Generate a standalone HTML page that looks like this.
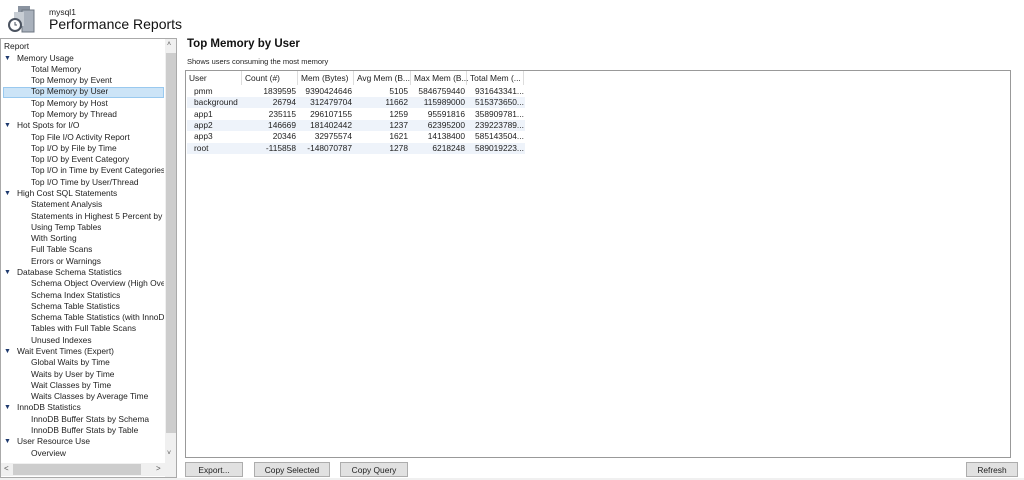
<!DOCTYPE html><html><head><style>
*{margin:0;padding:0;box-sizing:border-box}
body{width:1024px;height:480px;background:#fff;font-family:"Liberation Sans",sans-serif;font-size:8.4px;color:#222;position:relative;overflow:hidden}
.a{position:absolute;white-space:nowrap}
#tree{left:0;top:38px;width:177px;height:440px;border:1px solid #aaa;background:#fff;overflow:hidden}
.r{position:absolute;height:11px;line-height:11px;white-space:nowrap}
.c{left:17px}.c:before{content:"▼";position:absolute;left:-13px;font-size:7px;color:#1e3a6e}
.i{left:31px}
#tbl{left:185px;top:70px;width:826px;height:388px;border:1px solid #999;background:#fff}
.h{position:absolute;top:0;height:14px;line-height:14px;border-right:1px solid #ddd;padding-left:3px}
.row{position:absolute;left:1px;width:338px;height:11px;line-height:11px}
.row span{position:absolute}
.btn{position:absolute;top:462px;height:15px;line-height:15px;text-align:center;background:#e1e1e1;border:1px solid #adadad;font-size:8.4px}
</style></head><body>
<svg class="a" style="left:6px;top:4px" width="30" height="30" viewBox="0 0 30 30"><rect x="12" y="2" width="12" height="20" fill="#8a93a0"/><rect x="16" y="6" width="12" height="22" fill="#a9b1bc" stroke="#6c7580"/><rect x="8" y="8" width="10" height="14" fill="#c7cdd4"/><circle cx="9" cy="21" r="6" fill="#fff" stroke="#4b5360" stroke-width="2"/><path d="M9 18v3h2" stroke="#4b5360" fill="none"/></svg>
<div class="a" style="left:49px;top:7px;font-size:8.5px">mysql1</div>
<div class="a" style="left:49px;top:16px;font-size:14px;color:#111">Performance Reports</div>
<div id="tree" class="a">
<div class="r" style="left:3px;top:2px">Report</div>
<div class="a" style="left:164px;top:0;width:12px;height:438px;background:#f0f0f0"></div>
<div class="a" style="left:165px;top:14px;width:10px;height:380px;background:#cdcdcd"></div>
<div class="a" style="left:166px;top:2px;font-size:7px;color:#555">˄</div>
<div class="a" style="left:166px;top:411px;font-size:7px;color:#555">˅</div>
<div class="a" style="left:0;top:424px;width:164px;height:13px;background:#f0f0f0"></div>
<div class="a" style="left:12px;top:425px;width:128px;height:11px;background:#cdcdcd"></div>
<div class="a" style="left:3px;top:425px;font-size:8px;color:#555">&lt;</div>
<div class="a" style="left:155px;top:425px;font-size:8px;color:#555">&gt;</div>
<div class="a" style="left:2px;top:48px;width:161px;height:11px;background:#cce4f7;border:1px solid #99c9ef"></div>
</div>
<div id="items"></div>
<div class="a" style="left:187px;top:38px;font-size:11.5px;font-weight:bold;color:#111">Top Memory by User</div>
<div class="a" style="left:187px;top:57px;font-size:7.5px">Shows users consuming the most memory</div>
<div id="tbl" class="a">
<div class="h" style="left:0;width:56px">User</div><div class="h" style="left:56px;width:56px">Count (#)</div><div class="h" style="left:112px;width:56px">Mem (Bytes)</div><div class="h" style="left:168px;width:57px">Avg Mem (B...</div><div class="h" style="left:225px;width:56px">Max Mem (B...</div><div class="h" style="left:281px;width:57px">Total Mem (...</div>
<div id="rows"></div>
</div>
<div class="btn" style="left:185px;width:58px">Export...</div>
<div class="btn" style="left:254px;width:76px">Copy Selected</div>
<div class="btn" style="left:340px;width:68px">Copy Query</div>
<div class="btn" style="left:966px;width:52px">Refresh</div>
<div class="a" style="left:0;top:478px;width:1024px;height:2px;background:#f0f0f0"></div>
<script>
var t=[["c","Memory Usage"],["i","Total Memory"],["i","Top Memory by Event"],["i","Top Memory by User"],["i","Top Memory by Host"],["i","Top Memory by Thread"],["c","Hot Spots for I/O"],["i","Top File I/O Activity Report"],["i","Top I/O by File by Time"],["i","Top I/O by Event Category"],["i","Top I/O in Time by Event Categories"],["i","Top I/O Time by User/Thread"],["c","High Cost SQL Statements"],["i","Statement Analysis"],["i","Statements in Highest 5 Percent by R"],["i","Using Temp Tables"],["i","With Sorting"],["i","Full Table Scans"],["i","Errors or Warnings"],["c","Database Schema Statistics"],["i","Schema Object Overview (High Overh"],["i","Schema Index Statistics"],["i","Schema Table Statistics"],["i","Schema Table Statistics (with InnoDB"],["i","Tables with Full Table Scans"],["i","Unused Indexes"],["c","Wait Event Times (Expert)"],["i","Global Waits by Time"],["i","Waits by User by Time"],["i","Wait Classes by Time"],["i","Waits Classes by Average Time"],["c","InnoDB Statistics"],["i","InnoDB Buffer Stats by Schema"],["i","InnoDB Buffer Stats by Table"],["c","User Resource Use"],["i","Overview"],["i","I/O Statistics"]];
var h="";t.forEach(function(e,k){var y=52.5+k*11.29;if(y<455)h+='<div class="r a '+e[0]+'" style="top:'+y+'px;max-width:'+(164-(e[0]=="c"?17:31))+'px;overflow:'+(e[0]=="c"?'visible':'hidden')+'">'+e[1]+'</div>';});
document.getElementById("items").innerHTML=h;
var d=[["pmm","1839595","9390424646","5105","5846759440","931643341..."],["background","26794","312479704","11662","115989000","515373650..."],["app1","235115","296107155","1259","95591816","358909781..."],["app2","146669","181402442","1237","62395200","239223789..."],["app3","20346","32975574","1621","14138400","585143504..."],["root","-115858","-148070787","1278","6218248","589019223..."]];
var r="";d.forEach(function(e,k){r+='<div class="row" style="top:'+(15+k*11.3)+'px;background:'+(k%2?'#eef3fa':'#fff')+'"><span style="left:7px">'+e[0]+'</span><span style="right:229px">'+e[1]+'</span><span style="right:173px">'+e[2]+'</span><span style="right:117px">'+e[3]+'</span><span style="right:60px">'+e[4]+'</span><span style="left:288px">'+e[5]+'</span></div>';});
document.getElementById("rows").innerHTML=r;
</script>
</body></html>
